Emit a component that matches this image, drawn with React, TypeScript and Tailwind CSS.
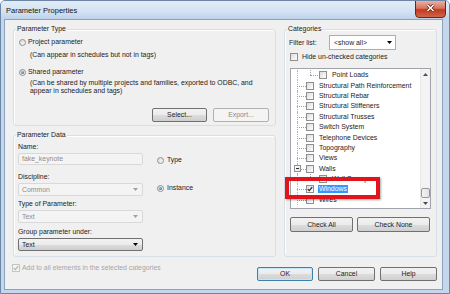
import React from "react";

type Row = {
  label: string;
  level: 1 | 2;
  checked?: boolean;
  selected?: boolean;
  expander?: boolean;
};

const rows: Row[] = [
  { label: "Point Loads", level: 2 },
  { label: "Structural Path Reinforcement", level: 1 },
  { label: "Structural Rebar", level: 1 },
  { label: "Structural Stiffeners", level: 1 },
  { label: "Structural Trusses", level: 1 },
  { label: "Switch System", level: 1 },
  { label: "Telephone Devices", level: 1 },
  { label: "Topography", level: 1 },
  { label: "Views", level: 1 },
  { label: "Walls", level: 1, expander: true },
  { label: "Wall Sweeps", level: 2 },
  { label: "Windows", level: 1, checked: true, selected: true },
  { label: "Wires", level: 1 },
];

const face = "bg-[linear-gradient(#f2f2f2_0%,#ebebeb_50%,#dddddd_50%,#cfcfcf_100%)]";

function Radio({ checked }: { checked?: boolean }) {
  return (
    <span className="flex h-[7px] w-[7px] shrink-0 items-center justify-center rounded-full border border-[#8e8f8f] bg-[linear-gradient(135deg,#d8d8d8,#fbfbfb)]">
      {checked && (
        <span className="h-[3px] w-[3px] rounded-full bg-[radial-gradient(circle_at_35%_35%,#8cc7ee,#1c5d93)]" />
      )}
    </span>
  );
}

function Check({ checked, disabled }: { checked?: boolean; disabled?: boolean }) {
  return (
    <span
      className={`flex h-[8px] w-[8px] shrink-0 items-center justify-center border ${
        disabled ? "border-[#c4c4c4] bg-[#f4f4f4]" : "border-[#8f8f8f] bg-[linear-gradient(135deg,#dcdcdc,#ffffff)]"
      }`}
    >
      {checked && (
        <svg viewBox="0 0 8 8" className="h-[6px] w-[6px]">
          <path d="M1 4.2 L3 6.3 L7 1.5" stroke={disabled ? "#b0b0b0" : "#1e1e1e"} strokeWidth="1.5" fill="none" />
        </svg>
      )}
    </span>
  );
}

function Arrow({ color = "#000000", up }: { color?: string; up?: boolean }) {
  return (
    <svg width="5" height="3" viewBox="0 0 5 3">
      <path d={up ? "M0 3H5L2.5 0Z" : "M0 0H5L2.5 3Z"} fill={color} />
    </svg>
  );
}

function Button({
  label,
  className = "",
  disabled,
  primary,
}: {
  label: string;
  className?: string;
  disabled?: boolean;
  primary?: boolean;
}) {
  const look = disabled
    ? "border-[#adb2b5] bg-[#f4f4f4] text-[#8a8a8a]"
    : primary
    ? `border-[#3c7fb1] ${face} shadow-[inset_0_0_0_1px_#c4e5f6]`
    : `border-[#707070] ${face}`;
  return (
    <div className={`flex items-center justify-center rounded-[2px] border ${look} ${className}`}>{label}</div>
  );
}

function Combo({ value, disabled, className = "" }: { value: string; disabled?: boolean; className?: string }) {
  return (
    <div
      className={`flex h-[13px] items-center justify-between rounded-[2px] border pl-[3px] pr-[4px] ${
        disabled ? "border-[#d9d9d9] bg-[#f4f4f4] text-[#8d8d8d]" : `border-[#707070] ${face}`
      } ${className}`}
    >
      <span>{value}</span>
      <Arrow color={disabled ? "#a0a0a0" : "#000000"} />
    </div>
  );
}

function Group({
  title,
  className = "",
  children,
}: {
  title: string;
  className?: string;
  children?: React.ReactNode;
}) {
  return (
    <div className={`relative rounded-[3px] border border-[#d5dfe5] shadow-[inset_1px_1px_0_#ffffff] ${className}`}>
      <span className="absolute -top-[5px] left-[2px] bg-[#f0f0f0] px-[1px] leading-[8px]">{title}</span>
      {children}
    </div>
  );
}

function TreeRow({ row }: { row: Row }) {
  return (
    <div className="flex h-[10.4px] items-center whitespace-nowrap">
      <div className="relative h-full w-[15px] shrink-0">
        <span className="absolute left-[6px] top-0 h-full border-l border-dotted border-[#b4b4b4]" />
        {row.level === 1 && (
          <span className="absolute left-[6px] top-1/2 w-[9px] border-t border-dotted border-[#a0a0a0]" />
        )}
        {row.expander && (
          <span className="absolute left-[3px] top-[1.7px] flex h-[7px] w-[7px] items-center justify-center border border-[#929292] bg-[linear-gradient(135deg,#ffffff,#e2e2e2)]">
            <span className="h-px w-[3px] bg-[#2b2b2b]" />
          </span>
        )}
      </div>
      {row.level === 2 && (
        <div className="relative h-full w-[13px] shrink-0">
          <span className="absolute left-[4px] top-0 h-1/2 border-l border-dotted border-[#a0a0a0]" />
          <span className="absolute left-[4px] top-1/2 w-[8px] border-t border-dotted border-[#a0a0a0]" />
        </div>
      )}
      <Check checked={row.checked} />
      <span className={row.selected ? "ml-[4px] bg-[#3399ff] px-[1px] text-white" : "ml-[5px]"}>{row.label}</span>
    </div>
  );
}

export default function App() {
  return (
    <div className="relative flex h-[294px] w-[450px] flex-col overflow-hidden rounded-t-[5px] border border-[#6e86a6] bg-[#c4d7ed] font-['Liberation_Sans',Arial,sans-serif] text-[6.9px] leading-[8px] text-[#1b1b1b]">
      {/* title bar */}
      <div className="flex h-[18px] shrink-0 items-start bg-[linear-gradient(#e2ecf7,#d3e2f3_60%,#bcd2eb)]">
        <span className="mt-[5px] pl-[5px] text-[7.5px] leading-[9px] text-[#111]">Parameter Properties</span>
        <div className="-mt-px ml-auto mr-[3px] flex h-[18px] w-[31px] justify-center rounded-b-[4px] border border-[#6b2418] bg-[linear-gradient(#eab1a4,#d77460_45%,#c2391f_55%,#d0654a)] pt-[3px]">
          <svg width="9" height="8" viewBox="0 0 9 8">
            <path d="M1.5 1 L7.5 7 M7.5 1 L1.5 7" stroke="#5a1a10" strokeWidth="3" />
            <path d="M1.5 1 L7.5 7 M7.5 1 L1.5 7" stroke="#ffffff" strokeWidth="1.6" />
          </svg>
        </div>
      </div>

      <div className="flex flex-1">
        <div className="w-[3px] shrink-0" />
        {/* client area */}
        <div className="flex h-[271px] w-[439px] shrink-0 flex-col border border-[#8ba1bd] bg-[#f0f0f0] pl-[8px] pr-[5px] pt-[9px]">
          <div className="flex gap-[8px]">
            {/* left column */}
            <div className="flex w-[263px] flex-col">
              <Group title="Parameter Type" className="h-[97px] pl-[5px] pt-[8px]">
                <div className="flex h-[8px] items-center gap-[2px]">
                  <Radio />
                  <span>Project parameter</span>
                </div>
                <div className="ml-[11px] mt-[5px] whitespace-nowrap">(Can appear in schedules but not in tags)</div>
                <div className="mt-[9px] flex h-[8px] items-center gap-[2px]">
                  <Radio checked />
                  <span>Shared parameter</span>
                </div>
                <div className="ml-[11px] mt-[3px] whitespace-nowrap leading-[8.4px]">
                  (Can be shared by multiple projects and families, exported to ODBC, and
                  <br />
                  appear in schedules and tags)
                </div>
                <div className="mt-[12px] flex justify-end gap-[6px] pr-[6px]">
                  <Button label="Select..." className="h-[14px] w-[55px]" />
                  <Button label="Export..." className="h-[14px] w-[56px]" disabled />
                </div>
              </Group>

              <Group title="Parameter Data" className="mt-[9px] flex h-[122px] pl-[4px] pt-[7px]">
                <div className="flex w-[125px] flex-col">
                  <span>Name:</span>
                  <div className="mt-[2px] flex h-[12px] items-center rounded-[2px] border border-[#d9d9d9] bg-[#f4f4f4] pl-[3px] text-[#8d8d8d]">
                    fake_keynote
                  </div>
                  <span className="mt-[8px]">Discipline:</span>
                  <Combo value="Common" disabled className="mt-[2px]" />
                  <span className="mt-[4px]">Type of Parameter:</span>
                  <Combo value="Text" disabled className="mt-[2px]" />
                  <span className="mt-[5px]">Group parameter under:</span>
                  <Combo value="Text" className="mt-[2px]" />
                </div>
                <div className="ml-[14px] flex flex-col">
                  <div className="mt-[13px] flex h-[8px] items-center gap-[3px]">
                    <Radio />
                    <span>Type</span>
                  </div>
                  <div className="mt-[20px] flex h-[8px] items-center gap-[3px]">
                    <Radio checked />
                    <span>Instance</span>
                  </div>
                </div>
              </Group>
            </div>

            {/* right column */}
            <Group title="Categories" className="flex h-[228px] w-[153px] flex-col pl-[5px] pt-[5px]">
              <div className="flex h-[15px] items-center">
                <span className="-ml-px w-[40px]">Filter list:</span>
                <div className="flex h-[15px] w-[67px] items-center justify-between border border-[#abadb3] bg-white pl-[4px] pr-[3px]">
                  <span>&lt;show all&gt;</span>
                  <Arrow />
                </div>
              </div>
              <div className="mt-[3px] flex h-[8px] items-center gap-[4px]">
                <Check />
                <span>Hide un-checked categories</span>
              </div>
              <div className="mt-[7px] flex h-[141px] w-[141px] border border-[#a0a4aa] bg-white">
                <div className="flex-1 overflow-hidden pt-px">
                  {rows.map((r) => (
                    <TreeRow key={r.label} row={r} />
                  ))}
                </div>
                <div className="flex w-[10px] flex-col border-l border-[#e8e8e8] bg-[#f3f3f3]">
                  <div className="flex h-[11px] items-center justify-center">
                    <Arrow up color="#4d4d4d" />
                  </div>
                  <div className="flex flex-1 flex-col justify-end">
                    <div className="h-[10px] w-full rounded-[2px] border border-[#979797] bg-[linear-gradient(90deg,#f3f3f3,#e2e2e2)]" />
                  </div>
                  <div className="flex h-[10px] items-center justify-center">
                    <Arrow color="#4d4d4d" />
                  </div>
                </div>
              </div>
              <div className="mt-[8px] flex gap-[4px]">
                <Button label="Check All" className="h-[15px] w-[63px]" />
                <Button label="Check None" className="h-[15px] w-[73px]" />
              </div>
            </Group>
          </div>

          {/* bottom row */}
          <div className="mt-[7px] flex">
            <div className="-ml-px flex h-[8px] items-center gap-[2px] text-[#a6a6a6]">
              <Check checked disabled />
              <span>Add to all elements in the selected categories</span>
            </div>
            <div className="ml-auto mt-[3px] flex gap-[5px]">
              <Button label="OK" primary className="h-[14px] w-[56px]" />
              <Button label="Cancel" className="h-[14px] w-[57px]" />
              <Button label="Help" className="h-[14px] w-[57px]" />
            </div>
          </div>
        </div>
        <div className="flex-1" />
      </div>

      {/* annotation highlight */}
      <div className="absolute left-[284px] top-[176px] h-[22px] w-[95px] border-[4px] border-[#e2141b] shadow-[1px_1px_2px_rgba(0,0,0,0.35)]" />
    </div>
  );
}
